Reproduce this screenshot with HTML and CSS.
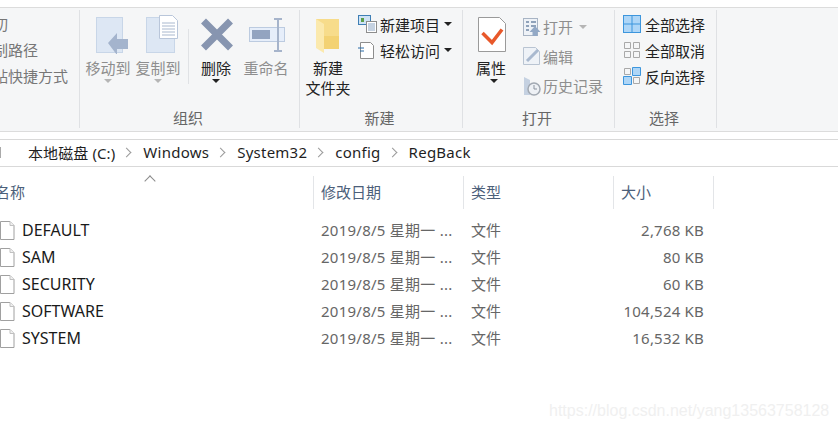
FILE: index.html
```html
<!DOCTYPE html>
<html lang="en">
<head>
  <meta charset="UTF-8" />
  <title>RegBack</title>
  <link rel="stylesheet" href="styles.css">
</head>
<body>
  <div class="ribbon">
    <div class="group group-clip">
      <div class="clip-list">
        <div class="clip-item">剪切</div>
        <div class="clip-item">复制路径</div>
        <div class="clip-item">粘贴快捷方式</div>
      </div>
    </div>

    <div class="group group-organize">
      <div class="group-body">
        <div class="big-btn off">
          <svg class="big-icon" width="50" height="40" viewBox="0 0 50 40">
            <rect x="13.500" y="3.500" width="26" height="35" fill="#dde7f4" stroke="#c8d6e8"/>
            <path d="M25 29l9-10v6h11v10H34v6z" fill="#a4b4cd"/>
          </svg>
          <div class="big-label">移动到</div>
          <span class="caret"></span>
        </div>
        <div class="big-btn off">
          <svg class="big-icon" width="50" height="40" viewBox="0 0 50 40">
            <rect x="13.500" y="3.500" width="28" height="35" fill="#dde7f4" stroke="#c8d6e8"/>
            <path d="M26.500 1.500h13l5 5v18h-18z" fill="#fff" stroke="#b9c6da"/>
            <path d="M29 9h13M29 12h13M29 15h13M29 18h13M29 21h13" stroke="#a9b8ce"/>
          </svg>
          <div class="big-label">复制到</div>
          <span class="caret"></span>
        </div>
        <div class="sep"></div>
        <div class="big-btn">
          <svg class="big-icon" width="50" height="40" viewBox="0 0 50 40">
            <path d="M12.500 7l27 27M39.500 7l-27 27" stroke="#8795b0" stroke-width="7"/>
          </svg>
          <div class="big-label">删除</div>
          <span class="caret dark"></span>
        </div>
        <div class="big-btn off">
          <svg class="big-icon" width="50" height="40" viewBox="0 0 50 40">
            <rect x="8.500" y="13.500" width="35" height="14" fill="#e6eefa" stroke="#bccbe0"/>
            <rect x="11" y="16" width="18" height="9" fill="#93a4c0"/>
            <path d="M33 5h8M37 5v32M33 37h8" stroke="#a6b4cb" stroke-width="2" fill="none"/>
          </svg>
          <div class="big-label">重命名</div>
        </div>
      </div>
      <div class="group-label">组织</div>
    </div>

    <div class="group group-new">
      <div class="group-body">
        <div class="big-btn folder-btn">
          <svg class="big-icon" width="50" height="40" viewBox="0 0 50 40">
            <path d="M13 5h23v30H20l-7-3z" fill="#f7dc8b"/>
            <path d="M13 5l8 5v29l-8-5z" fill="#fbe9ad"/>
            <path d="M21 22h15v13H21z" fill="#f3d273"/>
          </svg>
          <div class="big-label">新建</div>
          <div class="big-label">文件夹</div>
        </div>
        <div class="small-list">
          <div class="small-btn">
            <svg class="small-icon" width="22" height="20" viewBox="0 0 22 20">
              <rect x="0.500" y="1.500" width="12" height="9" fill="#cfe3f5" stroke="#3f7fb5"/>
              <rect x="3" y="4" width="3" height="4" fill="#5c9e4a"/>
              <rect x="8.500" y="7.500" width="10" height="11" fill="#fff" stroke="#8d8d8d"/>
              <path d="M10 10h7M10 12h7M10 14h7M10 16h7" stroke="#8ba5c4"/>
            </svg>
            <span>新建项目</span>
            <span class="caret dark"></span>
          </div>
          <div class="small-btn">
            <svg class="small-icon" width="22" height="20" viewBox="0 0 22 20">
              <path d="M2.500 2.500h10l3 3v13h-13z" fill="#fff" stroke="#8d8d8d"/>
              <path d="M0 8h6M2 11h4" stroke="#2a6da8"/>
            </svg>
            <span>轻松访问</span>
            <span class="caret dark"></span>
          </div>
        </div>
      </div>
      <div class="group-label">新建</div>
    </div>

    <div class="group group-open">
      <div class="group-body">
        <div class="big-btn prop-btn">
          <svg class="big-icon" width="50" height="40" viewBox="0 0 50 40">
            <path d="M12.500 3.500h21l6 6v28h-27z" fill="#fff" stroke="#9a9a9a"/>
            <path d="M16.500 19l9.500 9.500 10-13" fill="none" stroke="#e8582a" stroke-width="3.500"/>
          </svg>
          <div class="big-label">属性</div>
          <span class="caret dark"></span>
        </div>
        <div class="small-list open-list">
          <div class="small-btn off">
            <svg class="small-icon" width="20" height="20" viewBox="0 0 20 20">
              <rect x="0.500" y="1.500" width="14" height="17" fill="#eef2f7" stroke="#a8b4c4"/>
              <path d="M3 5h3M3 9h3M3 13h3M8 5h5M8 9h5" stroke="#8fa2ba" stroke-width="2"/>
              <path d="M12 9l5.500 6h-3v4h-5v-4h-3z" fill="#93a9c6"/>
            </svg>
            <span>打开</span>
            <span class="caret"></span>
          </div>
          <div class="small-btn off">
            <svg class="small-icon" width="20" height="20" viewBox="0 0 20 20">
              <path d="M0.500 1.500h12l4 4v13h-16z" fill="#eef2f7" stroke="#b9c4d2"/>
              <path d="M4 15L15 4" stroke="#a9b9cf" stroke-width="3"/>
            </svg>
            <span>编辑</span>
          </div>
          <div class="small-btn off">
            <svg class="small-icon" width="20" height="20" viewBox="0 0 20 20">
              <path d="M1 1l6 3v15H1z" fill="#c5d1e1"/>
              <circle cx="11" cy="13" r="6" fill="#eef1f5" stroke="#a2a9b2" stroke-width="1.500"/>
              <path d="M11 9v4h3" fill="none" stroke="#8b939e"/>
            </svg>
            <span>历史记录</span>
          </div>
        </div>
      </div>
      <div class="group-label">打开</div>
    </div>

    <div class="group group-select">
      <div class="group-body">
        <div class="small-list">
          <div class="small-btn">
            <svg class="small-icon" width="18" height="18" viewBox="0 0 18 18">
              <rect x="0.500" y="0.500" width="17" height="17" fill="#aed6f7" stroke="#3d96dd"/>
              <path d="M9 0v18M0 9h18" stroke="#3d96dd"/>
            </svg>
            <span>全部选择</span>
          </div>
          <div class="small-btn">
            <svg class="small-icon" width="18" height="18" viewBox="0 0 18 18">
              <path d="M1.500 1.500h6v6h-6zM10.500 1.500h6v6h-6zM1.500 10.500h6v6h-6zM10.500 10.500h6v6h-6z" fill="none" stroke="#a9a9a9"/>
            </svg>
            <span>全部取消</span>
          </div>
          <div class="small-btn">
            <svg class="small-icon" width="18" height="18" viewBox="0 0 18 18">
              <path d="M1.500 1.500h6v6h-6zM10.500 10.500h6v6h-6z" fill="none" stroke="#a9a9a9"/>
              <path d="M9.500 0.500h8v8h-8zM0.500 9.500h8v8h-8z" fill="#aed6f7" stroke="#3d96dd"/>
            </svg>
            <span>反向选择</span>
          </div>
        </div>
      </div>
      <div class="group-label">选择</div>
    </div>
  </div>

  <div class="address">
    <span class="crumb-edge"></span>
    <span class="crumb crumb-drive">本地磁盘 (C:)</span>
    <span class="crumb">Windows</span>
    <span class="crumb">System32</span>
    <span class="crumb">config</span>
    <span class="crumb last">RegBack</span>
  </div>

  <div class="files">
    <div class="file-head">
      <div class="head-cell head-name">名称<span class="sort-mark"></span></div>
      <div class="head-cell">修改日期</div>
      <div class="head-cell">类型</div>
      <div class="head-cell">大小</div>
    </div>

    <div class="file-row">
      <div class="file-name">
        <svg class="file-icon" width="15" height="19" viewBox="0 0 15 19"><path d="M0.500 0.500h9.500l4 4v14H0.500z" fill="#fff" stroke="#a0a0a0"/><path d="M10 0.500v4h4" fill="#f0f0f0" stroke="#c0c0c0"/></svg>
        DEFAULT
      </div>
      <div class="file-date">2019/8/5 星期一 ...</div>
      <div>文件</div>
      <div class="file-size">2,768 KB</div>
    </div>
    <div class="file-row">
      <div class="file-name">
        <svg class="file-icon" width="15" height="19" viewBox="0 0 15 19"><path d="M0.500 0.500h9.500l4 4v14H0.500z" fill="#fff" stroke="#a0a0a0"/><path d="M10 0.500v4h4" fill="#f0f0f0" stroke="#c0c0c0"/></svg>
        SAM
      </div>
      <div class="file-date">2019/8/5 星期一 ...</div>
      <div>文件</div>
      <div class="file-size">80 KB</div>
    </div>
    <div class="file-row">
      <div class="file-name">
        <svg class="file-icon" width="15" height="19" viewBox="0 0 15 19"><path d="M0.500 0.500h9.500l4 4v14H0.500z" fill="#fff" stroke="#a0a0a0"/><path d="M10 0.500v4h4" fill="#f0f0f0" stroke="#c0c0c0"/></svg>
        SECURITY
      </div>
      <div class="file-date">2019/8/5 星期一 ...</div>
      <div>文件</div>
      <div class="file-size">60 KB</div>
    </div>
    <div class="file-row">
      <div class="file-name">
        <svg class="file-icon" width="15" height="19" viewBox="0 0 15 19"><path d="M0.500 0.500h9.500l4 4v14H0.500z" fill="#fff" stroke="#a0a0a0"/><path d="M10 0.500v4h4" fill="#f0f0f0" stroke="#c0c0c0"/></svg>
        SOFTWARE
      </div>
      <div class="file-date">2019/8/5 星期一 ...</div>
      <div>文件</div>
      <div class="file-size">104,524 KB</div>
    </div>
    <div class="file-row">
      <div class="file-name">
        <svg class="file-icon" width="15" height="19" viewBox="0 0 15 19"><path d="M0.500 0.500h9.500l4 4v14H0.500z" fill="#fff" stroke="#a0a0a0"/><path d="M10 0.500v4h4" fill="#f0f0f0" stroke="#c0c0c0"/></svg>
        SYSTEM
      </div>
      <div class="file-date">2019/8/5 星期一 ...</div>
      <div>文件</div>
      <div class="file-size">16,532 KB</div>
    </div>
  </div>

  <div class="watermark">https://blog.csdn.net/yang13563758128</div>
</body>
</html>
```

FILE: styles.css
```css
* {
  margin: 0;
  padding: 0;
  box-sizing: border-box;
}
html, body {
  height: 100%;
  overflow: hidden;
}
body {
  background: #fff;
  color: #222;
  font-family: "Noto Sans", "Noto Sans CJK SC", sans-serif;
  font-size: 15px;
  position: relative;
}

/* ribbon */
.ribbon {
  display: flex;
  height: 125px;
  margin-top: 7px;
  padding-top: 2px;
  background: #f5f6f7;
  border-top: 1px solid #dcdcdc;
  border-bottom: 1px solid #dcdcdc;
}
.group {
  height: 118px;
  display: flex;
  flex-direction: column;
  flex-shrink: 0;
  border-right: 1px solid #dfe1e4;
}
.group-body {
  height: 98px;
  display: flex;
}
.group-label {
  height: 20px;
  line-height: 20px;
  padding-right: 3px;
  text-align: center;
  color: #666;
}
.group-clip {
  width: 80px;
  overflow: hidden;
}
.group-organize { width: 220px; padding-left: 3px; }
.group-organize .group-label { margin-left: -3px; }
.group-new { width: 163px; }
.group-open { width: 152px; }
.group-select { width: 102px; }

.clip-list {
  margin-left: -22px;
  padding-top: 1px;
  color: #777;
  white-space: nowrap;
}
.clip-item {
  height: 26px;
  line-height: 26px;
}

.big-btn {
  width: 50px;
  padding-top: 4px;
  display: flex;
  flex-direction: column;
  align-items: center;
  flex-shrink: 0;
}
.big-icon { display: block; }
.big-label {
  height: 20px;
  line-height: 20px;
  margin-top: 4px;
  white-space: nowrap;
}
.big-label + .big-label { margin-top: 0; }
.off { color: #8e8e8e; }
.sep {
  width: 1px;
  height: 55px;
  margin: 19px 2px 0 5px;
  background: #e0e2e5;
}
.caret {
  display: inline-block;
  width: 0;
  height: 0;
  border-left: 4px solid transparent;
  border-right: 4px solid transparent;
  border-top: 4px solid #b5b5b5;
}
.caret.dark { border-top-color: #222; }
.big-btn .caret { margin-top: 1px; }

.folder-btn { margin: 0 5px 0 3px; }
.prop-btn { margin: 0 7px 0 3px; }

.small-list {
  padding-top: 1px;
}
.small-btn {
  height: 26px;
  display: flex;
  align-items: center;
  white-space: nowrap;
}
.small-btn .caret { margin-left: 4px; }
.small-icon { flex-shrink: 0; }
.group-open .small-list { padding-top: 2px; }
.group-open .small-btn { height: 29.5px; }
.group-open .caret { margin-left: 6px; }
.group-select .small-list { padding-left: 8px; }
.group-select .small-icon { margin-right: 4px; }

/* address bar */
.address {
  height: 28px;
  margin-top: 7px;
  padding-bottom: 2px;
  display: flex;
  align-items: center;
  border-top: 1px solid #d9d9d9;
  border-bottom: 1px solid #d9d9d9;
  color: #1f1f1f;
  letter-spacing: 0.25px;
}
.crumb-edge {
  width: 1px;
  height: 11px;
  margin-right: 27px;
  background: #aaa;
}
.crumb {
  display: flex;
  align-items: center;
  white-space: nowrap;
}
.crumb-drive { letter-spacing: 0.1px; }
.crumb::after {
  content: "";
  width: 6px;
  height: 6px;
  margin: 0 13px 0 8px;
  border-top: 1px solid #9a9a9a;
  border-right: 1px solid #9a9a9a;
  transform: rotate(45deg);
}
.crumb.last::after { display: none; }

/* file list */
.files {
  padding-top: 9px;
}
.file-head, .file-row {
  display: grid;
  grid-template-columns: 314px 150px 150px 100px;
}
.file-head {
  height: 33px;
  margin-bottom: 8px;
  color: #4c607a;
}
.head-cell {
  line-height: 32px;
  padding-left: 7px;
  border-right: 1px solid #e3e5e8;
}
.head-name {
  padding-left: 0;
  text-indent: -5px;
  position: relative;
}
.sort-mark {
  position: absolute;
  left: 146px;
  top: 1px;
  width: 8px;
  height: 8px;
  border-top: 1px solid #8a8a8a;
  border-left: 1px solid #8a8a8a;
  transform: rotate(45deg);
}
.file-row {
  height: 27px;
  line-height: 27px;
  color: #666;
}
.file-row > div {
  padding-left: 7px;
  white-space: nowrap;
}
.file-row > .file-name {
  padding-left: 0;
  display: flex;
  align-items: center;
  color: #1a1a1a;
  font-size: 16px;
}
.file-icon {
  margin-right: 7px;
  flex-shrink: 0;
}
.file-row > .file-date {
  letter-spacing: 0.25px;
}
.file-row > .file-size {
  padding-right: 10px;
  text-align: right;
  letter-spacing: 0.2px;
}

.watermark {
  position: absolute;
  left: 549px;
  top: 402px;
  font-family: "Liberation Sans", sans-serif;
  font-size: 16px;
  color: #f0f0f0;
  white-space: nowrap;
}
```
